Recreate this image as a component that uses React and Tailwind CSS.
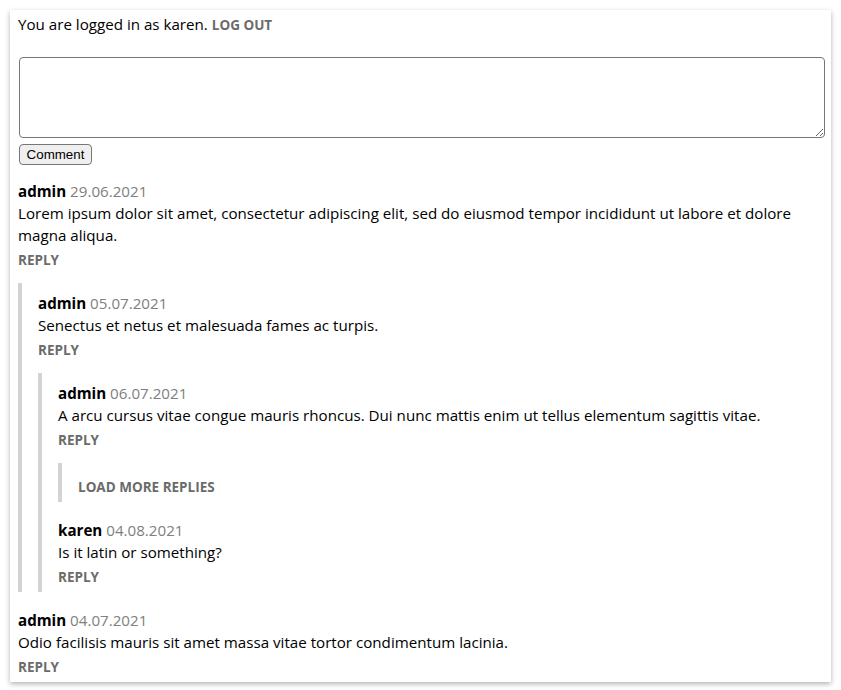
import React from "react";

const font = { fontFamily: '"Open Sans", "Noto Sans", sans-serif' };

const comments = [
  {
    id: 1,
    author: "admin",
    date: "29.06.2021",
    text: "Lorem ipsum dolor sit amet, consectetur adipiscing elit, sed do eiusmod tempor incididunt ut labore et dolore magna aliqua.",
    replies: [
      {
        id: 2,
        author: "admin",
        date: "05.07.2021",
        text: "Senectus et netus et malesuada fames ac turpis.",
        replies: [
          {
            id: 3,
            author: "admin",
            date: "06.07.2021",
            text: "A arcu cursus vitae congue mauris rhoncus. Dui nunc mattis enim ut tellus elementum sagittis vitae.",
            more: true,
          },
          { id: 4, author: "karen", date: "04.08.2021", text: "Is it latin or something?" },
        ],
      },
    ],
  },
  {
    id: 5,
    author: "admin",
    date: "04.07.2021",
    text: "Odio facilisis mauris sit amet massa vitae tortor condimentum lacinia.",
  },
];

const Comment = ({ comment }) => {
  const hasChildren = comment.replies || comment.more;

  return (
    <div className="flex flex-col">
      <div className="leading-[22px]">
        <span className="font-bold text-black">{comment.author}</span>{" "}
        <span className="text-[#808080]">{comment.date}</span>
      </div>
      <div className="leading-[22px] text-black">{comment.text}</div>
      <button className="mt-1 mb-[5px] self-start text-[13.5px] font-bold uppercase leading-5 text-[#6b6b6b]">
        Reply
      </button>
      {hasChildren && (
        <div className="mt-2 flex flex-col border-l-4 border-[#d3d3d3] pl-4 pt-[9px]">
          {comment.more ? (
            <button className="mt-[5px] mb-[5px] self-start text-[13.5px] font-bold uppercase leading-5 text-[#6b6b6b]">
              Load more replies
            </button>
          ) : (
            <CommentList items={comment.replies} />
          )}
        </div>
      )}
    </div>
  );
};

const CommentList = ({ items }) => {
  return (
    <div className="flex flex-col gap-[17px]">
      {items.map((c) => (
        <Comment key={c.id} comment={c} />
      ))}
    </div>
  );
};

export default function App() {
  return (
    <div className="min-h-screen bg-white pt-[10px] pl-[10px]" style={font}>
      <div className="w-[821px] bg-white px-2 pt-[3px] text-[15.15px] shadow-[0_2px_5px_rgba(0,0,0,0.3)]">
        <div className="leading-[22px] text-black">
          You are logged in as karen.{" "}
          <button className="text-[13.5px] font-bold uppercase text-[#6b6b6b]">Log out</button>
        </div>
        <textarea className="mt-[21px] ml-px block h-[81px] w-[806px] rounded-sm border border-[#767676] bg-white" />
        <button
          className="mt-[6px] ml-px block h-[21px] w-[73px] rounded-sm border border-[#767676] bg-[#efefef] text-[13.33px] text-black"
          style={{ fontFamily: '"Liberation Sans", Arial, sans-serif' }}
        >
          Comment
        </button>
        <div className="mt-[15px]">
          <CommentList items={comments} />
        </div>
      </div>
    </div>
  );
}
